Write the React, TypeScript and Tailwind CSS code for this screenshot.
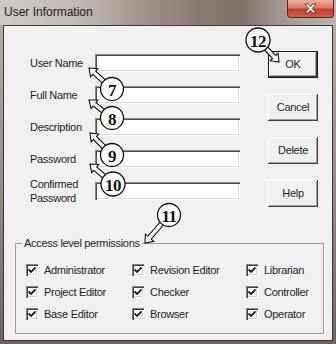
import React from "react";

const fields = [
  { label: "User Name" },
  { label: "Full Name" },
  { label: "Description" },
  { label: "Password" },
  { label: "Confirmed Password" },
];

const buttons = ["OK", "Cancel", "Delete", "Help"];

const permissions = [
  "Administrator",
  "Revision Editor",
  "Librarian",
  "Project Editor",
  "Checker",
  "Controller",
  "Base Editor",
  "Browser",
  "Operator",
];

// numbered callouts drawn over the dialog: circle centre, radius, arrow tip
const callouts = [
  { n: "7", cx: 112, cy: 89, r: 11.5, tx: 89, ty: 68 },
  { n: "8", cx: 112, cy: 118, r: 11.5, tx: 89, ty: 100 },
  { n: "9", cx: 112, cy: 155, r: 11.5, tx: 90, ty: 133 },
  { n: "10", cx: 113, cy: 184, r: 12, tx: 90, ty: 164 },
  { n: "11", cx: 169, cy: 215, r: 11.5, tx: 145, ty: 243 },
  { n: "12", cx: 258, cy: 40, r: 12, tx: 279, ty: 62 },
];

function arrowPoints(sx: number, sy: number, hx: number, hy: number) {
  const len = Math.hypot(hx - sx, hy - sy);
  const dx = (hx - sx) / len;
  const dy = (hy - sy) / len;
  const px = -dy;
  const py = dx;
  const w = 2.2;
  const hw = 5.5;
  const hl = 7;
  const bx = hx - dx * hl;
  const by = hy - dy * hl;
  const pts = [
    [sx + px * w, sy + py * w],
    [bx + px * w, by + py * w],
    [bx + px * hw, by + py * hw],
    [hx, hy],
    [bx - px * hw, by - py * hw],
    [bx - px * w, by - py * w],
    [sx - px * w, sy - py * w],
  ];
  return pts.map((p) => `${p[0].toFixed(1)},${p[1].toFixed(1)}`).join(" ");
}

const CheckBox = () => (
  <div className="w-[12px] h-[12px] bg-white shadow-[inset_1px_1px_#808080,inset_2px_2px_#404040,inset_-1px_-1px_#ffffff,inset_-2px_-2px_#d4d0c8] flex items-center justify-center shrink-0">
    <svg width="8" height="8" viewBox="0 0 8 8">
      <path d="M0.5 3.5 L3 6 L7.5 1.5" stroke="#1a1a1a" strokeWidth="1.8" fill="none" />
    </svg>
  </div>
);

export default function App() {
  return (
    <div
      className="relative w-[336px] h-[344px] overflow-hidden bg-[linear-gradient(180deg,#b9afab_0%,#9b8e89_50%,#6f625d_100%)] text-[#1e1e1e] text-[11px] tracking-[-0.3px]"
      style={{ fontFamily: '"Liberation Sans", Arial, sans-serif' }}
    >
      {/* title bar */}
      <div className="h-[25px] flex items-start bg-[linear-gradient(90deg,#cfc8c5_0%,#c4bbb7_22%,#a69790_40%,#8c7a72_58%,#84716a_72%,#a49792_84%,#bbb3b0_100%)]">
        <div className="pl-[4px] pt-[4px] text-[12px] tracking-normal text-[#1c1c1c] leading-[16px]">
          User Information
        </div>
        <div className="ml-auto mr-[2px] w-[47px] h-[18px] rounded-b-[4px] border border-t-0 border-[#5e2218] bg-[linear-gradient(180deg,#e9b2a4_0%,#d97a64_45%,#c2412b_55%,#d4604a_100%)] flex items-center justify-center">
          <svg width="13" height="11" viewBox="0 0 13 11">
            <path
              d="M1 1 H4.2 L6.5 3.8 L8.8 1 H12 L8.2 5.5 L12 10 H8.8 L6.5 7.2 L4.2 10 H1 L4.8 5.5 Z"
              fill="#ffffff"
              stroke="#5a1d14"
              strokeWidth="0.8"
            />
          </svg>
        </div>
      </div>

      {/* client area */}
      <div className="mx-[3px] h-[316px] border border-[#3a3a3a] bg-[#f0f0f0] flex flex-col">
        <div className="h-[210px] flex">
          <div className="pt-[28px] pl-[26px] flex flex-col gap-[14px]">
            {fields.map((f) => (
              <div key={f.label} className="h-[18px] flex items-center">
                <div className="w-[65px] leading-[14px]">
                  {f.label === "Confirmed Password" ? (
                    <>
                      Confirmed
                      <br />
                      Password
                    </>
                  ) : (
                    f.label
                  )}
                </div>
                <div className="w-[145px] h-[18px] bg-white shadow-[inset_1px_1px_#8a8a8a,inset_2px_2px_#505050,inset_-1px_-1px_#ffffff,inset_-2px_-2px_#dcdcdc]" />
              </div>
            ))}
          </div>
          <div className="pt-[25px] pl-[28px] flex flex-col gap-[16px]">
            {buttons.map((b) => (
              <div
                key={b}
                className={`w-[50px] h-[27px] flex items-center justify-center bg-[#f0f0f0] ${
                  b === "OK"
                    ? "shadow-[inset_0_0_0_1px_#1a1a1a,inset_-2px_-2px_#404040,inset_2px_2px_#ffffff,inset_-3px_-3px_#a0a0a0]"
                    : "shadow-[inset_-1px_-1px_#404040,inset_1px_1px_#ffffff,inset_-2px_-2px_#a0a0a0]"
                }`}
              >
                {b}
              </div>
            ))}
          </div>
        </div>

        <fieldset className="ml-[11px] w-[309px] border border-[#9c9c9c] shadow-[1px_1px_#ffffff] pt-[9px] pb-[8px]">
          <legend className="ml-[6px] px-[2px] leading-[14px]">Access level permissions</legend>
          <div className="pl-[10px] grid grid-cols-[106px_114px_1fr]">
            {permissions.map((p) => (
              <div key={p} className="h-[22px] flex items-center gap-[6px]">
                <CheckBox />
                <span>{p}</span>
              </div>
            ))}
          </div>
        </fieldset>
      </div>

      {/* numbered callouts */}
      <svg className="absolute inset-0 pointer-events-none" width="336" height="344">
        {callouts.map((c) => (
          <g key={c.n}>
            <polygon
              points={arrowPoints(c.cx, c.cy, c.tx, c.ty)}
              fill="#ffffff"
              stroke="#111"
              strokeWidth="1.1"
              strokeLinejoin="miter"
            />
            <circle cx={c.cx} cy={c.cy} r={c.r} fill="#ffffff" stroke="#111" strokeWidth="1.3" />
            <text
              x={c.cx}
              y={c.cy + 1}
              textAnchor="middle"
              dominantBaseline="central"
              fontFamily='"Liberation Serif", "Times New Roman", serif'
              fontWeight="bold"
              fontSize="17"
              letterSpacing="-0.5"
              fill="#111"
            >
              {c.n}
            </text>
          </g>
        ))}
      </svg>
    </div>
  );
}
